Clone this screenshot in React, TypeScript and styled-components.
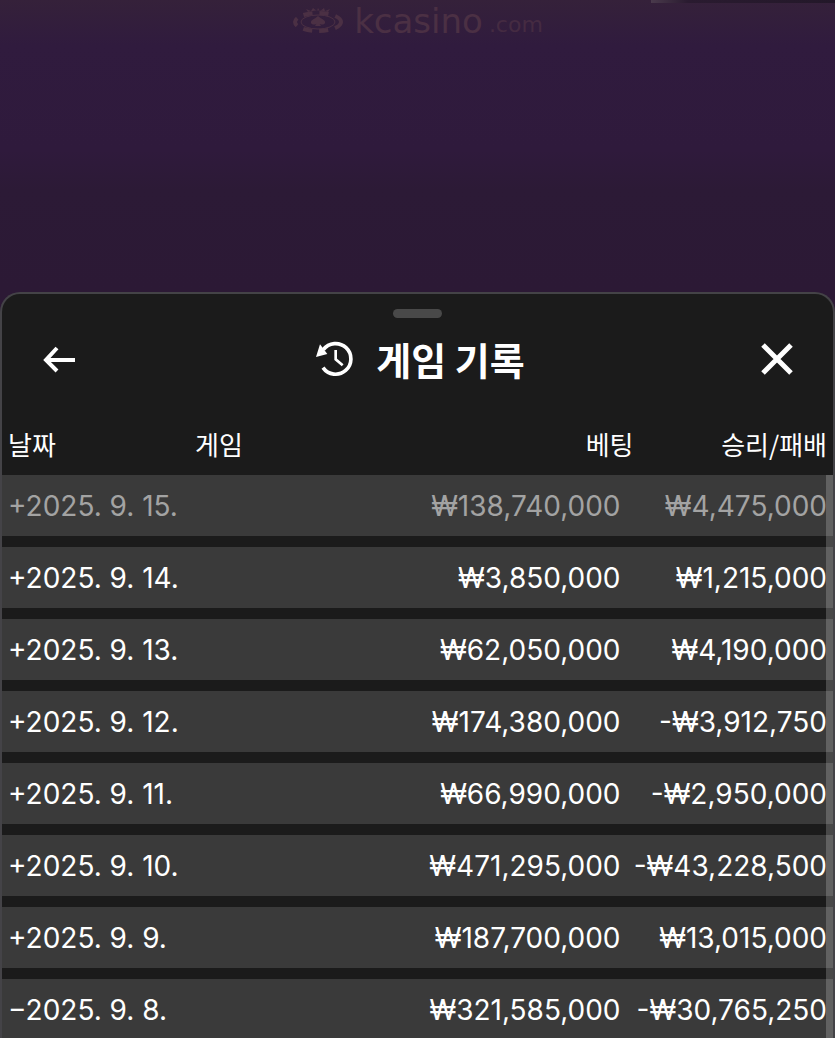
import React, { useState } from "react";
import styled, { createGlobalStyle } from "styled-components";

const GlobalStyle = createGlobalStyle`
  * { box-sizing: border-box; }
  body {
    margin: 0;
    background: #2c1935;
    color: #fff;
    font-family: Inter, "Noto Sans CJK KR", sans-serif;
  }
  button {
    margin: 0;
    padding: 0;
    border: 0;
    background: none;
    color: inherit;
    font: inherit;
    cursor: pointer;
  }
`;

const Screen = styled.div`
  display: flex;
  flex-direction: column;
  height: 100vh;
  overflow: hidden;
  background: linear-gradient(#35213a 0, #301b3e 46px, #2f1a3c 150px, #2c1a36 190px, #2c1935 292px);
`;

const Hero = styled.header`
  flex: none;
  height: 292px;
  display: flex;
  flex-direction: column;
  align-items: center;
`;

const TopEdge = styled.div`
  align-self: flex-end;
  width: 22%;
  height: 3px;
  background: linear-gradient(90deg, #4a3a4c, #2a1b30 20%, #231829);
`;

const Brand = styled.div`
  display: flex;
  align-items: center;
  gap: 10px;
  padding-top: 4px;
  color: #4b3044;
`;

const BrandName = styled.div`
  display: flex;
  align-items: flex-end;
  gap: 6px;
  font-family: "DejaVu Sans", sans-serif;
  font-size: 34px;
  line-height: 18px;
`;

const BrandSuffix = styled.span`
  margin-bottom: -6px;
  font-size: 22px;
  line-height: 22px;
  color: #452b42;
`;

const Sheet = styled.main`
  flex: 1;
  min-height: 0;
  display: flex;
  flex-direction: column;
  border: 2px solid #444347;
  border-bottom: 0;
  border-radius: 20px 20px 0 0;
  background: #1b1b1b;
  overflow: hidden;
`;

const Handle = styled.div`
  flex: none;
  align-self: center;
  width: 49px;
  height: 9px;
  margin-top: 15px;
  border-radius: 5px;
  background: #494949;
`;

const TitleBar = styled.div`
  flex: none;
  display: grid;
  grid-template-columns: 1fr auto 1fr;
  align-items: center;
  height: 81px;
  margin-bottom: 16px;
  padding: 0 34px;
`;

const IconButton = styled.button<{ $end?: boolean }>`
  display: flex;
  justify-self: ${(p) => (p.$end ? "end" : "start")};
`;

const Title = styled.h1`
  display: flex;
  align-items: center;
  gap: 22px;
  margin: 0;
  padding-left: 4px;
  font: 700 38px/48px "Noto Sans CJK KR", sans-serif;
`;

const ListArea = styled.div`
  position: relative;
  flex: 1;
  min-height: 0;
  display: flex;
`;

const Scroller = styled.div`
  flex: 1;
  overflow-y: auto;
  scrollbar-width: none;
`;

const ScrollThumb = styled.div`
  position: absolute;
  top: 60px;
  right: 0;
  bottom: 0;
  width: 7px;
  background: rgba(255, 255, 255, 0.2);
`;

const Table = styled.table`
  width: 100%;
  table-layout: fixed;
  border-collapse: separate;
  border-spacing: 0;
`;

const Th = styled.th<{ $right?: boolean }>`
  position: sticky;
  top: 0;
  height: 60px;
  padding: 0 6px 2px;
  background: #1b1b1b;
  text-align: ${(p) => (p.$right ? "right" : "left")};
  font: 400 26px/32px "Noto Sans CJK KR", sans-serif;
  white-space: nowrap;

  &:nth-child(3) { padding-right: 0; }
`;

const Row = styled.tr<{ $muted: boolean }>`
  color: ${(p) => (p.$muted ? "#a3a3a3" : "#fff")};
`;

const Td = styled.td<{ $right?: boolean }>`
  height: 72px;
  padding: 0 6px;
  border-bottom: 11px solid #1b1b1b;
  background: #3a3a3a;
  text-align: ${(p) => (p.$right ? "right" : "left")};
  font-size: 28px;
  line-height: 36px;
  white-space: nowrap;

  &:nth-child(3) { padding-right: 13px; }
  &:nth-child(4) { padding-left: 0; }
`;

const BrandMark = () => (
  <svg width="52" height="27" viewBox="0 0 52 27" fill="none" stroke="currentColor" aria-hidden="true">
    <ellipse cx="26" cy="15" rx="17" ry="7" strokeWidth="1" />
    <ellipse cx="26" cy="15" rx="23" ry="9" strokeWidth="4" strokeDasharray="9 7" />
    <path d="M26 9c3 3 8 4 7 7-1 2-5 2-6 0l2 3h-6l2-3c-1 2-5 2-6 0-1-3 4-4 7-7Z" fill="currentColor" stroke="none" />
    <path d="m16 5-2-3 5 2 2-3 4 3 1-3 2 3 4-3 1 3 5-2-2 3c-6-2-14-2-20 0Z" fill="currentColor" stroke="none" />
  </svg>
);

const BackIcon = () => (
  <svg width="46" height="40" viewBox="0 0 46 40" fill="none" stroke="currentColor" strokeWidth="4" aria-hidden="true">
    <path d="M39 21H10M21 9 10 21l11 11" />
  </svg>
);

const CloseIcon = () => (
  <svg width="44" height="40" viewBox="0 0 44 40" fill="none" stroke="currentColor" strokeWidth="5" aria-hidden="true">
    <path d="m8 6 28 28M36 6 8 34" />
  </svg>
);

const HistoryIcon = () => (
  <svg width="40" height="38" viewBox="0 0 120 114" fill="none" stroke="currentColor" aria-hidden="true">
    <path d="M27 83A46 46 0 1 0 28 29" strokeWidth="11" />
    <path d="m18 13-12 38 34-9Z" fill="currentColor" stroke="none" />
    <path d="M65 30v28l21 18" strokeWidth="8" />
  </svg>
);

type Entry = { date: string; bet: string; result: string; muted?: boolean; open?: boolean };

const entries: Entry[] = [
  { date: "2025. 9. 15.", bet: "₩138,740,000", result: "₩4,475,000", muted: true },
  { date: "2025. 9. 14.", bet: "₩3,850,000", result: "₩1,215,000" },
  { date: "2025. 9. 13.", bet: "₩62,050,000", result: "₩4,190,000" },
  { date: "2025. 9. 12.", bet: "₩174,380,000", result: "-₩3,912,750" },
  { date: "2025. 9. 11.", bet: "₩66,990,000", result: "-₩2,950,000" },
  { date: "2025. 9. 10.", bet: "₩471,295,000", result: "-₩43,228,500" },
  { date: "2025. 9. 9.", bet: "₩187,700,000", result: "₩13,015,000" },
  { date: "2025. 9. 8.", bet: "₩321,585,000", result: "-₩30,765,250", open: true },
];

const HistoryRow = ({ entry }: { entry: Entry }) => {
  const [open, setOpen] = useState(Boolean(entry.open));
  return (
    <Row $muted={Boolean(entry.muted)}>
      <Td>
        <button type="button" aria-expanded={open} onClick={() => setOpen(!open)}>
          {open ? "−" : "+"}
          {entry.date}
        </button>
      </Td>
      <Td />
      <Td $right>{entry.bet}</Td>
      <Td $right>{entry.result}</Td>
    </Row>
  );
};

export default function App() {
  return (
    <Screen>
      <GlobalStyle />
      <Hero>
        <TopEdge />
        <Brand>
          <BrandMark />
          <BrandName>
            kcasino
            <BrandSuffix>.com</BrandSuffix>
          </BrandName>
        </Brand>
      </Hero>
      <Sheet>
        <Handle />
        <TitleBar>
          <IconButton type="button" aria-label="뒤로">
            <BackIcon />
          </IconButton>
          <Title>
            <HistoryIcon />
            게임 기록
          </Title>
          <IconButton type="button" aria-label="닫기" $end>
            <CloseIcon />
          </IconButton>
        </TitleBar>
        <ListArea>
          <Scroller>
            <Table>
              <colgroup>
                <col width="22.5%" />
                <col width="22%" />
                <col width="31.5%" />
                <col width="24%" />
              </colgroup>
              <thead>
                <tr>
                  <Th scope="col">날짜</Th>
                  <Th scope="col">게임</Th>
                  <Th scope="col" $right>베팅</Th>
                  <Th scope="col" $right>승리/패배</Th>
                </tr>
              </thead>
              <tbody>
                {entries.map((entry) => (
                  <HistoryRow key={entry.date} entry={entry} />
                ))}
              </tbody>
            </Table>
          </Scroller>
          <ScrollThumb />
        </ListArea>
      </Sheet>
    </Screen>
  );
}
